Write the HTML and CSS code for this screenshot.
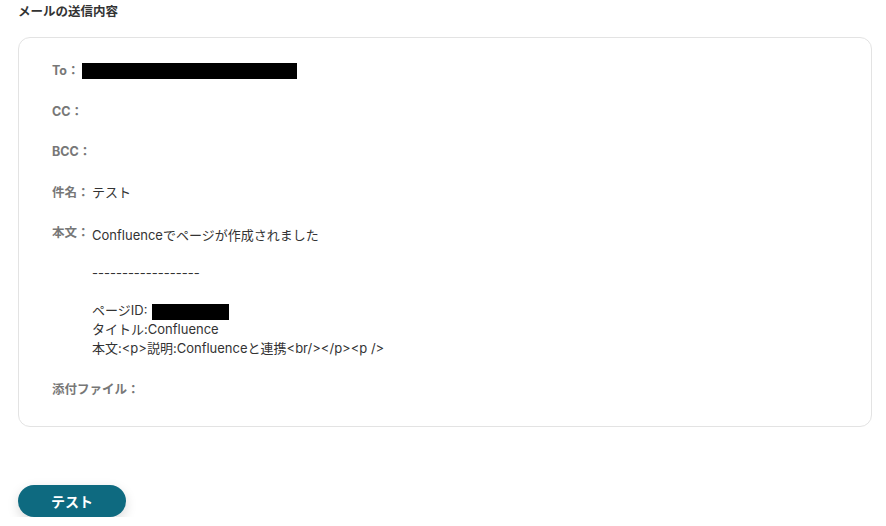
FILE: index.html
```html
<!DOCTYPE html>
<html lang="ja">
<head>
    <meta charset="UTF-8">
    <meta name="viewport" content="width=device-width, initial-scale=1.0">
    <link rel="stylesheet" href="styles.css">
</head>
<body>
    <div class="page">
        <h2 class="section-title">メールの送信内容</h2>
        <div class="mail-card">
            <div class="mail-row">
                <span class="mail-label">To：</span>
                <span class="mail-value"><span class="redact redact-to"></span></span>
            </div>
            <div class="mail-row">
                <span class="mail-label">CC：</span>
                <span class="mail-value"></span>
            </div>
            <div class="mail-row">
                <span class="mail-label">BCC：</span>
                <span class="mail-value"></span>
            </div>
            <div class="mail-row">
                <span class="mail-label">件名：</span>
                <span class="mail-value">テスト</span>
            </div>
            <div class="mail-row">
                <span class="mail-label">本文：</span>
                <div class="mail-value mail-body">
                    <p>Confluenceでページが作成されました</p>
                    <p>&nbsp;</p>
                    <p>------------------</p>
                    <p>&nbsp;</p>
                    <p>ページID:<span class="redact redact-id"></span></p>
                    <p>タイトル:Confluence</p>
                    <p>本文:&lt;p&gt;説明:Confluenceと連携&lt;br/&gt;&lt;/p&gt;&lt;p /&gt;</p>
                </div>
            </div>
            <div class="mail-row">
                <span class="mail-label">添付ファイル：</span>
                <span class="mail-value"></span>
            </div>
        </div>
        <button class="test-btn">テスト</button>
    </div>
</body>
</html>
```

FILE: styles.css
```css
/* mail preview */
body {
    font-family: Inter, "Noto Sans CJK JP", sans-serif;
    margin: 0;
    padding: 0;
    background-color: #fff;
    color: #333;
}
.page {
    padding: 3px 14px 0 18px;
}
.section-title {
    font-size: 12.5px;
    font-weight: bold;
    line-height: 18px;
    margin: 0 0 16px;
    color: #333;
}
.mail-card {
    border: 1px solid #e3e3e3;
    border-radius: 12px;
    padding: 23px 33px 28px;
    display: flex;
    flex-direction: column;
    gap: 22.5px;
}
.mail-row {
    display: flex;
    align-items: flex-start;
    font-size: 13px;
    line-height: 18px;
    min-height: 18px;
}
.mail-label {
    color: #777;
    font-size: 12.5px;
    font-weight: bold;
    line-height: 17px;
    padding-top: 1px;
    margin-right: 2.5px;
    white-space: nowrap;
}
.mail-value {
    color: #333;
}
.mail-body {
    padding-top: 3px;
    line-height: 18.7px;
}
.mail-body p {
    margin: 0;
}
.redact {
    display: inline-block;
    background-color: #000;
    vertical-align: middle;
}
.redact-to {
    width: 215px;
    height: 16px;
}
.redact-id {
    width: 77px;
    height: 16px;
    margin-left: 5px;
}
.test-btn {
    margin-top: 58px;
    width: 108px;
    height: 32px;
    border: none;
    border-radius: 16px;
    background-color: #0e6a80;
    color: #fff;
    font-family: Inter, "Noto Sans CJK JP", sans-serif;
    font-size: 14px;
    font-weight: bold;
    box-shadow: 0 4px 12px rgba(0, 0, 0, 0.15);
    cursor: pointer;
}
```
